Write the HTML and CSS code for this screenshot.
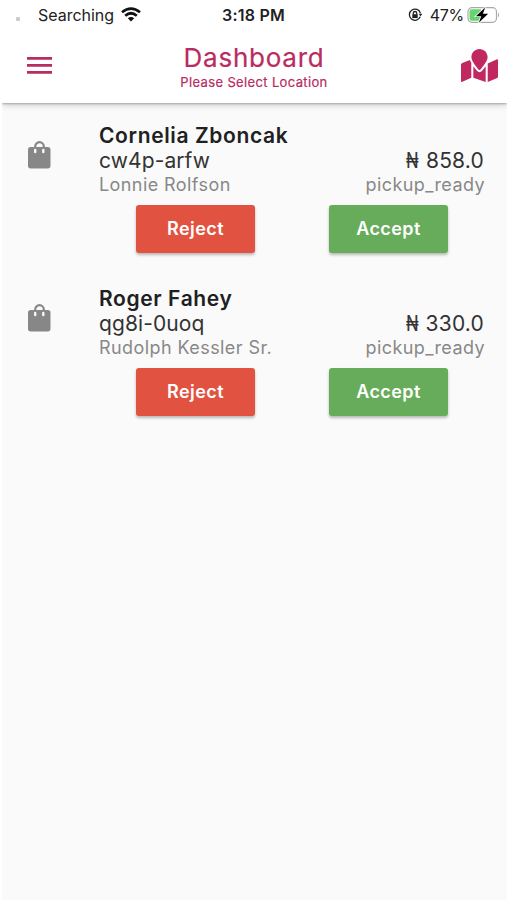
FILE: index.html
```html
<!DOCTYPE html>
<html lang="en">
<head>
<meta charset="utf-8">
<title>Dashboard</title>
<link rel="stylesheet" href="styles.css">
</head>
<body>
<header class="app-header">
  <div class="status">
    <div class="status-left">
      <span class="signal"></span>
      <span class="carrier">Searching</span>
      <svg class="wifi" viewBox="0 0 20 15" fill="none" stroke="#111" stroke-width="2.7"><path d="M1 5.2Q10-2 19 5.2M4.2 8.7Q10 3.8 15.8 8.7"/><path d="M10 14.5L6.8 11.2Q10 8.7 13.2 11.2Z" fill="#111" stroke="none"/></svg>
    </div>
    <span class="clock">3:18 PM</span>
    <div class="status-right">
      <svg class="lock" viewBox="0 0 15 14" fill="none" stroke="#222" stroke-width="1.3"><path d="M12.2 8.8A5.6 5.6 0 1 1 12.4 5.2"/><path d="M10.7 5.8h3.6l-1.8 2.6z" fill="#222" stroke="none"/><path d="M5.3 6.5V5.2a1.7 1.7 0 0 1 3.4 0v1.3"/><path d="M4.3 6.2h5.4v3.9H4.3z" fill="#222" stroke="none"/></svg>
      <span class="percent">47%</span>
      <svg class="battery" viewBox="0 0 33 18"><rect x="1" y="1.7" width="28.5" height="14.6" rx="4" fill="#fff" stroke="#aaa" stroke-width="1.2"/><path d="M4.8 3.2H14v11.6H4.8A2.3 2.3 0 0 1 2.5 12.5v-7A2.3 2.3 0 0 1 4.8 3.2Z" fill="#65d36e"/><path d="M31 6.5q2.2 2.5 0 5z" fill="#aaa"/><path d="M18.200 1.500L8.800 10.200h5.400l-2.400 6.600 9.400-9h-5.300z" fill="#000" stroke="#fff" stroke-width="1.600" paint-order="stroke"/></svg>
    </div>
  </div>
  <div class="toolbar">
    <svg class="menu" viewBox="0 0 25 17" fill="#b92b62"><path d="M0 0h25v2.800H0zM0 7h25v2.800H0zM0 14h25v2.800H0z"/></svg>
    <div class="heading">
      <h1 class="title">Dashboard</h1>
      <p class="subtitle">Please Select Location</p>
    </div>
    <svg class="map" viewBox="0 0 576 512" fill="#c12860"><path d="M288 0c-69.600 0-126 56.400-126 126 0 56.300 82.400 158.800 113.900 196.020 6.400 7.540 17.800 7.540 24.200 0C331.600 284.800 414 182.300 414 126 414 56.400 357.600 0 288 0zM20.100 216A32 32 0 0 0 0 245.700V496c0 11.300 11.400 19.100 21.900 14.900L160 448V214.900c-8.800-16-16.100-31.500-21.300-46.400L20.100 216zM288 359.700c-14.100 0-27.400-6.200-36.500-17-19.700-23.200-40.600-49.600-59.500-76.700v182l192 64V266c-18.900 27.100-39.800 53.500-59.500 76.700-9.100 10.800-22.400 17-36.500 17zM554.100 161.200L416 224v288l139.900-56A32 32 0 0 0 576 426.300V176c0-11.300-11.400-19.100-21.900-14.800z"/></svg>
  </div>
</header>
<main class="orders">
  <article class="order">
    <svg class="bag" viewBox="0 0 23 28"><path d="M7.200 7V5.500a4.300 4.300 0 0 1 8.600 0V7" fill="none" stroke="#878787" stroke-width="2.200"/><rect y="6" width="22.500" height="21.500" rx="2.700" fill="#878787"/><path d="M7.200 9v2M15.300 9v2" stroke="#fafafa" stroke-width="2.400" stroke-linecap="round"/></svg>
    <div class="details">
      <h2 class="name">Cornelia Zboncak</h2>
      <div class="line code"><span>cw4p-arfw</span><span class="price"><span class="naira">₦</span>858.0</span></div>
      <div class="line meta"><span>Lonnie Rolfson</span><span class="state">pickup_ready</span></div>
      <div class="actions"><button class="btn reject">Reject</button><button class="btn accept">Accept</button></div>
    </div>
  </article>
  <article class="order">
    <svg class="bag" viewBox="0 0 23 28"><path d="M7.200 7V5.500a4.300 4.300 0 0 1 8.600 0V7" fill="none" stroke="#878787" stroke-width="2.200"/><rect y="6" width="22.500" height="21.500" rx="2.700" fill="#878787"/><path d="M7.200 9v2M15.300 9v2" stroke="#fafafa" stroke-width="2.400" stroke-linecap="round"/></svg>
    <div class="details">
      <h2 class="name">Roger Fahey</h2>
      <div class="line code"><span>qg8i-0uoq</span><span class="price"><span class="naira">₦</span>330.0</span></div>
      <div class="line meta"><span>Rudolph Kessler Sr.</span><span class="state">pickup_ready</span></div>
      <div class="actions"><button class="btn reject">Reject</button><button class="btn accept">Accept</button></div>
    </div>
  </article>
</main>
</body>
</html>
```
FILE: styles.css
```css
* { box-sizing: border-box; }
body { margin: 0; min-height: 900px; background: #fafafa; border-left: 2px solid #fff; color: #333; font-family: Inter, "Liberation Sans", sans-serif; white-space: nowrap; }
h1, h2, p { margin: 0; }
svg { display: block; flex: none; }
.app-header { height: 103px; background: #fff; box-shadow: 0 1px 2px #0004, 0 3px 6px #0002; clip-path: inset(0 0 -12px 0); }
.status { height: 30px; display: grid; grid-template-columns: 1fr auto 1fr; align-items: center; color: #222; font-size: 16px; }
.status-left, .status-right { display: flex; align-items: center; }
.status-right { justify-content: flex-end; padding-right: 7px; }
.signal { width: 4px; height: 4px; margin: 7px 18px 0 14px; border-radius: 1px; background: #ccc; }
.carrier { letter-spacing: -0.02px; }
.wifi { width: 20px; height: 15px; margin: -1px 0 0 7px; }
.clock { margin-right: 2px; font-weight: 600; font-size: 16px; letter-spacing: 0.2px; }
.lock { width: 15px; height: 14px; margin-right: 7px; }
.percent { margin-right: 1px; letter-spacing: -0.3px; }
.battery { width: 33px; height: 18px; margin: -1px 0 0 2px; }
.toolbar { height: 73px; display: flex; align-items: flex-start; padding: 0 9px 0 25px; }
.menu { width: 25px; height: 17px; margin-top: 27px; }
.heading { flex: 1; margin-top: 12px; padding-right: 5px; text-align: center; color: #b92b62; -webkit-text-stroke: 0.2px #b92b62; }
.title { font-size: 26px; line-height: 32px; font-weight: 400; letter-spacing: 0.75px; }
.subtitle { margin-top: -1px; font-size: 13px; line-height: 18px; letter-spacing: 0.36px; }
.map { width: 37px; height: 33px; margin-top: 19px; }
.orders { padding: 19px 22px 0 26px; }
.order { display: flex; height: 163px; }
.bag { width: 23px; height: 28px; margin: 19px 48px 0 0; }
.details { flex: 1; }
.name { padding-top: 1px; font-size: 21px; line-height: 25px; font-weight: 600; color: #202020; letter-spacing: 0.62px; }
.line { display: flex; justify-content: space-between; }
.code { height: 25px; font-size: 21px; line-height: 25px; letter-spacing: 0.1px; }
.price { display: flex; margin-right: 1px; letter-spacing: 0.2px; }
.naira { width: 20px; transform: scaleX(0.78); transform-origin: left; letter-spacing: 0; -webkit-text-stroke: 0.2px #333; }
.meta { height: 23px; font-size: 18px; line-height: 23px; color: #888; letter-spacing: 0.42px; }
.actions { display: grid; grid-template-columns: 1fr 1fr; justify-items: center; margin-top: 9px; }
.btn { width: 119px; height: 48px; padding: 0; border: 0; border-radius: 3px; color: #fff; font: 600 18px/48px Inter, sans-serif; letter-spacing: 0.45px; box-shadow: 0 2px 3px #0004; }
.reject { background: #e25241; }
.accept { background: #67ac5b; }
```
